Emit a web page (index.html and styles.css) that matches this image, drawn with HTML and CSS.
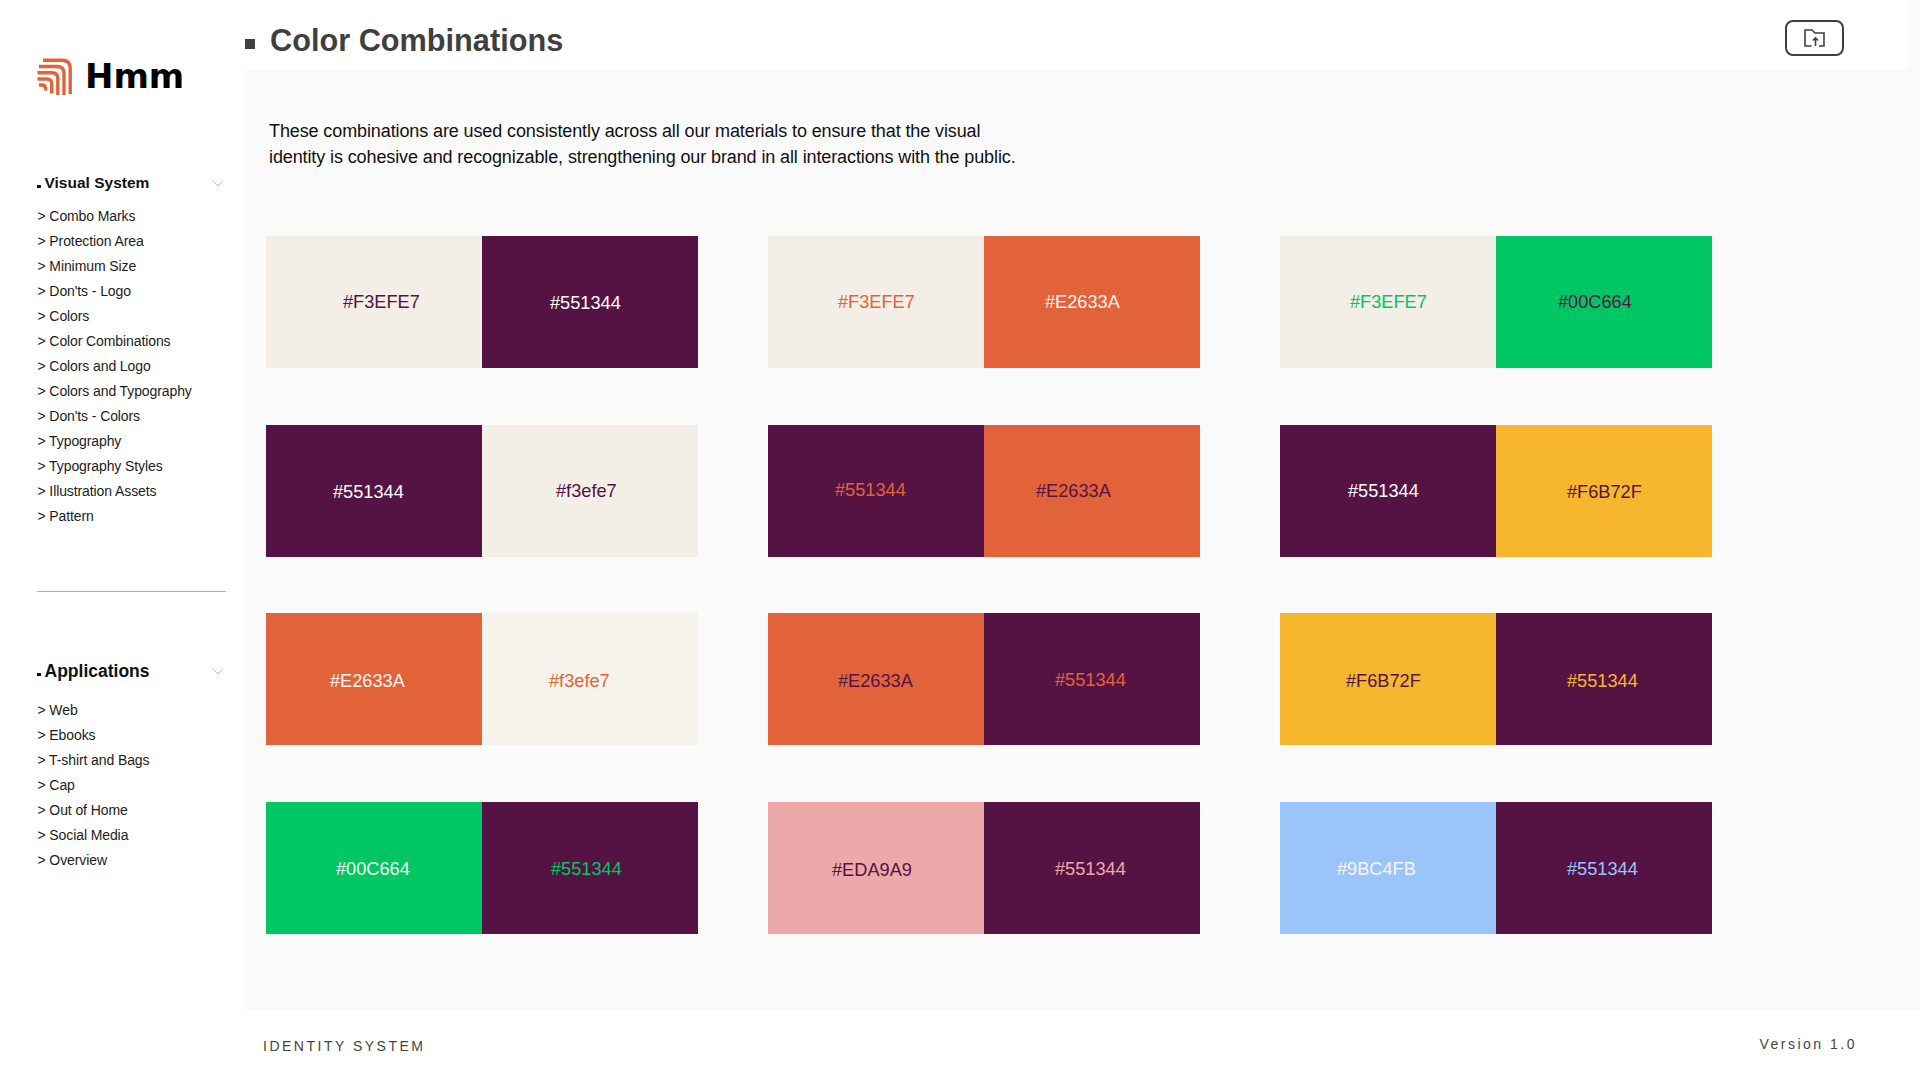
FILE: index.html
```html
<!DOCTYPE html>
<html lang="en">
<head>
    <meta charset="UTF-8">
    <meta name="viewport" content="width=device-width, initial-scale=1.0">
    <title>Color Combinations</title>
    <link rel="stylesheet" href="styles.css">
</head>
<body>
    <div class="page">
        <aside class="sidebar">
            <div class="logo">
                <svg class="logo-mark" viewBox="0 0 36 37" fill="none" stroke="#e2633a" stroke-width="3.4">
                    <path d="M6 2.2H25Q33.2 2.2 33.2 10V36"/>
                    <path d="M2 8.5H20Q27 8.5 27 15.5V37"/>
                    <path d="M.5 14.8H15Q20.8 14.8 20.8 20.5V37"/>
                    <path d="M.5 21H10Q14.7 21 14.7 26V35.5"/>
                    <path d="M2 27H5Q8.6 27 8.6 30.5V32.5"/>
                </svg>
                <span class="logo-text">Hmm</span>
            </div>

            <div class="nav-head">
                <i class="dot"></i>Visual System
                <svg class="chev" viewBox="0 0 10 6" fill="none" stroke="#bbb"><path d="M.5 .5L5 5L9.5 .5"/></svg>
            </div>
            <ul class="nav-list">
                <li>&gt; Combo Marks</li>
                <li>&gt; Protection Area</li>
                <li>&gt; Minimum Size</li>
                <li>&gt; Don'ts - Logo</li>
                <li>&gt; Colors</li>
                <li>&gt; Color Combinations</li>
                <li>&gt; Colors and Logo</li>
                <li>&gt; Colors and Typography</li>
                <li>&gt; Don'ts - Colors</li>
                <li>&gt; Typography</li>
                <li>&gt; Typography Styles</li>
                <li>&gt; Illustration Assets</li>
                <li>&gt; Pattern</li>
            </ul>

            <hr class="nav-line">

            <div class="nav-head nav-head-big">
                <i class="dot"></i>Applications
                <svg class="chev" viewBox="0 0 10 6" fill="none" stroke="#bbb"><path d="M.5 .5L5 5L9.5 .5"/></svg>
            </div>
            <ul class="nav-list">
                <li>&gt; Web</li>
                <li>&gt; Ebooks</li>
                <li>&gt; T-shirt and Bags</li>
                <li>&gt; Cap</li>
                <li>&gt; Out of Home</li>
                <li>&gt; Social Media</li>
                <li>&gt; Overview</li>
            </ul>
        </aside>

        <main class="main">
            <header class="topbar">
                <i class="title-mark"></i>
                <h1 class="title">Color Combinations</h1>
                <button class="export">
                    <svg width="21" height="18" viewBox="0 0 21 18" fill="none" stroke="#404040" stroke-width="1.6">
                        <path d="M7.5 17H1V1H8L11 4H20V17H15"/>
                        <path d="M11.5 17V9M9 11.5L11.5 9L14 11.5"/>
                    </svg>
                </button>
            </header>

            <section class="panel">
                <p class="intro">These combinations are used consistently across all our materials to ensure that the visual<br>identity is cohesive and recognizable, strengthening our brand in all interactions with the public.</p>

                <div class="combos">
                    <div class="pair">
                        <div class="chip cream t-purple at-77">#F3EFE7</div>
                        <div class="chip purple t-white at-68 y-2">#551344</div>
                    </div>
                    <div class="pair">
                        <div class="chip cream t-orange at-70">#F3EFE7</div>
                        <div class="chip orange t-cream at-61">#E2633A</div>
                    </div>
                    <div class="pair">
                        <div class="chip cream t-green at-70">#F3EFE7</div>
                        <div class="chip green t-purple at-62">#00C664</div>
                    </div>

                    <div class="pair">
                        <div class="chip purple t-white at-67 y-4">#551344</div>
                        <div class="chip cream t-purple at-74 y-2">#f3efe7</div>
                    </div>
                    <div class="pair">
                        <div class="chip purple t-orange at-67">#551344</div>
                        <div class="chip orange t-purple at-52 y-2">#E2633A</div>
                    </div>
                    <div class="pair">
                        <div class="chip purple t-white at-68 y-2">#551344</div>
                        <div class="chip yellow t-purple at-71 y-4">#F6B72F</div>
                    </div>

                    <div class="pair">
                        <div class="chip orange t-cream at-64 y-4">#E2633A</div>
                        <div class="chip cream-light t-orange at-67 y-4">#f3efe7</div>
                    </div>
                    <div class="pair">
                        <div class="chip orange t-purple at-70 y-4">#E2633A</div>
                        <div class="chip purple t-orange at-71 y-2">#551344</div>
                    </div>
                    <div class="pair">
                        <div class="chip yellow t-purple at-66 y-4">#F6B72F</div>
                        <div class="chip purple t-yellow at-71 y-4">#551344</div>
                    </div>

                    <div class="pair">
                        <div class="chip green t-cream at-70 y-4">#00C664</div>
                        <div class="chip purple t-green at-69 y-4">#551344</div>
                    </div>
                    <div class="pair">
                        <div class="chip pink t-purple at-64 y-6">#EDA9A9</div>
                        <div class="chip purple t-pink at-71 y-4">#551344</div>
                    </div>
                    <div class="pair">
                        <div class="chip blue t-cream at-57 y-4">#9BC4FB</div>
                        <div class="chip purple t-blue at-71 y-4">#551344</div>
                    </div>
                </div>
            </section>

            <footer class="footer">
                <span class="foot-left">IDENTITY SYSTEM</span>
                <span class="foot-right">Version 1.0</span>
            </footer>
        </main>
    </div>
</body>
</html>
```

FILE: styles.css
```css
*{
    box-sizing: border-box;
}
body{
    margin: 0;
    background: #fff;
    font-family: "Liberation Sans", Arial, sans-serif;
    color: #111;
}
.page{
    display: flex;
    width: 1920px;
    height: 1080px;
    overflow: hidden;
}

/* sidebar */
.sidebar{
    width: 244px;
    flex: none;
    padding: 58px 18px 0 37px;
}
.logo{
    display: flex;
    align-items: center;
    height: 37px;
    margin-bottom: 78px;
}
.logo-mark{
    width: 36px;
    height: 37px;
    flex: none;
}
.logo-text{
    margin-left: 12px;
    font-family: "DejaVu Sans", sans-serif;
    font-size: 33px;
    font-weight: 700;
    line-height: 37px;
    transform: scaleX(1.03);
    transform-origin: left;
    color: #000;
}
.nav-head{
    display: flex;
    align-items: center;
    height: 20px;
    font-size: 15.5px;
    font-weight: 700;
    color: #111;
}
.nav-head-big{
    font-size: 17.5px;
}
.dot{
    width: 3.5px;
    height: 3.5px;
    margin: 7px 4px 0 0;
    background: #111;
}
.chev{
    width: 10px;
    height: 6px;
    margin: 2px 3px 0 auto;
}
.nav-list{
    list-style: none;
    margin: 11px 0 0;
    padding: 0;
}
.nav-head-big + .nav-list{
    margin-top: 17px;
}
.nav-list li{
    height: 25px;
    padding-left: .5px;
    font-size: 14px;
    line-height: 25px;
    letter-spacing: -.1px;
    white-space: nowrap;
    color: #1c1c1c;
}
.nav-line{
    height: 1px;
    margin: 62px 0 69px;
    border: 0;
    background: #b0b0b0;
}

/* main column */
.main{
    flex: 1;
    display: flex;
    flex-direction: column;
}
.topbar{
    display: flex;
    align-items: center;
    height: 70px;
    flex: none;
    border-right: 12px solid #fafafa;
    padding: 0 64px 0 1px;
}
.title-mark{
    width: 10px;
    height: 10px;
    margin: 17px 15px 0 0;
    background: #404040;
}
.title{
    margin: 12px 0 0;
    font-size: 30.7px;
    font-weight: 700;
    color: #3f3f3f;
}
.export{
    display: flex;
    align-items: center;
    justify-content: center;
    width: 59px;
    height: 36px;
    margin: 6px 0 0 auto;
    padding: 0;
    border: 2px solid #404040;
    border-radius: 8px;
    background: #fff;
}
.panel{
    height: 940px;
    flex: none;
    padding: 48px 0 0 22px;
    background: #fafafa;
}
.intro{
    margin: 0 0 66px 3px;
    font-size: 18px;
    line-height: 26px;
    letter-spacing: -.11px;
    color: #111;
}
.combos{
    display: grid;
    grid-template-columns: 502px 512px 432px;
    grid-auto-rows: 132px;
    row-gap: 56.67px;
}
.pair{
    display: flex;
    width: 432px;
}
.chip{
    display: flex;
    align-items: center;
    width: 216px;
    font-size: 18.2px;
}
.y-2{ padding-top: 2px; }
.y-4{ padding-top: 4px; }
.y-6{ padding-top: 6px; }

/* swatch colours */
.cream{ background: #f3efe7; }
.cream-light{ background: #f6f3ec; }
.purple{ background: #551344; }
.orange{ background: #e2633a; }
.green{ background: #00c664; }
.yellow{ background: #f6b72f; }
.pink{ background: #eda9a9; }
.blue{ background: #9bc4fb; }
.t-white{ color: #fff; }
.t-cream{ color: #f8f4ee; }
.t-purple{ color: #551344; }
.t-orange{ color: #e2633a; }
.t-green{ color: #00c664; }
.t-yellow{ color: #f6b72f; }
.t-pink{ color: #eda9a9; }
.t-blue{ color: #9bc4fb; }

/* label offsets */
.at-52{ padding-left: 52px; }
.at-57{ padding-left: 57px; }
.at-61{ padding-left: 61px; }
.at-62{ padding-left: 62px; }
.at-64{ padding-left: 64px; }
.at-66{ padding-left: 66px; }
.at-67{ padding-left: 67px; }
.at-68{ padding-left: 68px; }
.at-69{ padding-left: 69px; }
.at-70{ padding-left: 70px; }
.at-71{ padding-left: 71px; }
.at-74{ padding-left: 74px; }
.at-77{ padding-left: 77px; }

/* footer */
.footer{
    display: flex;
    justify-content: space-between;
    flex: 1;
    padding: 0 63px 0 19px;
    color: #444;
    font-size: 14px;
    white-space: nowrap;
}
.foot-left{
    margin-top: 28px;
    letter-spacing: 2.5px;
}
.foot-right{
    margin-top: 26px;
    letter-spacing: 2.5px;
}
```
